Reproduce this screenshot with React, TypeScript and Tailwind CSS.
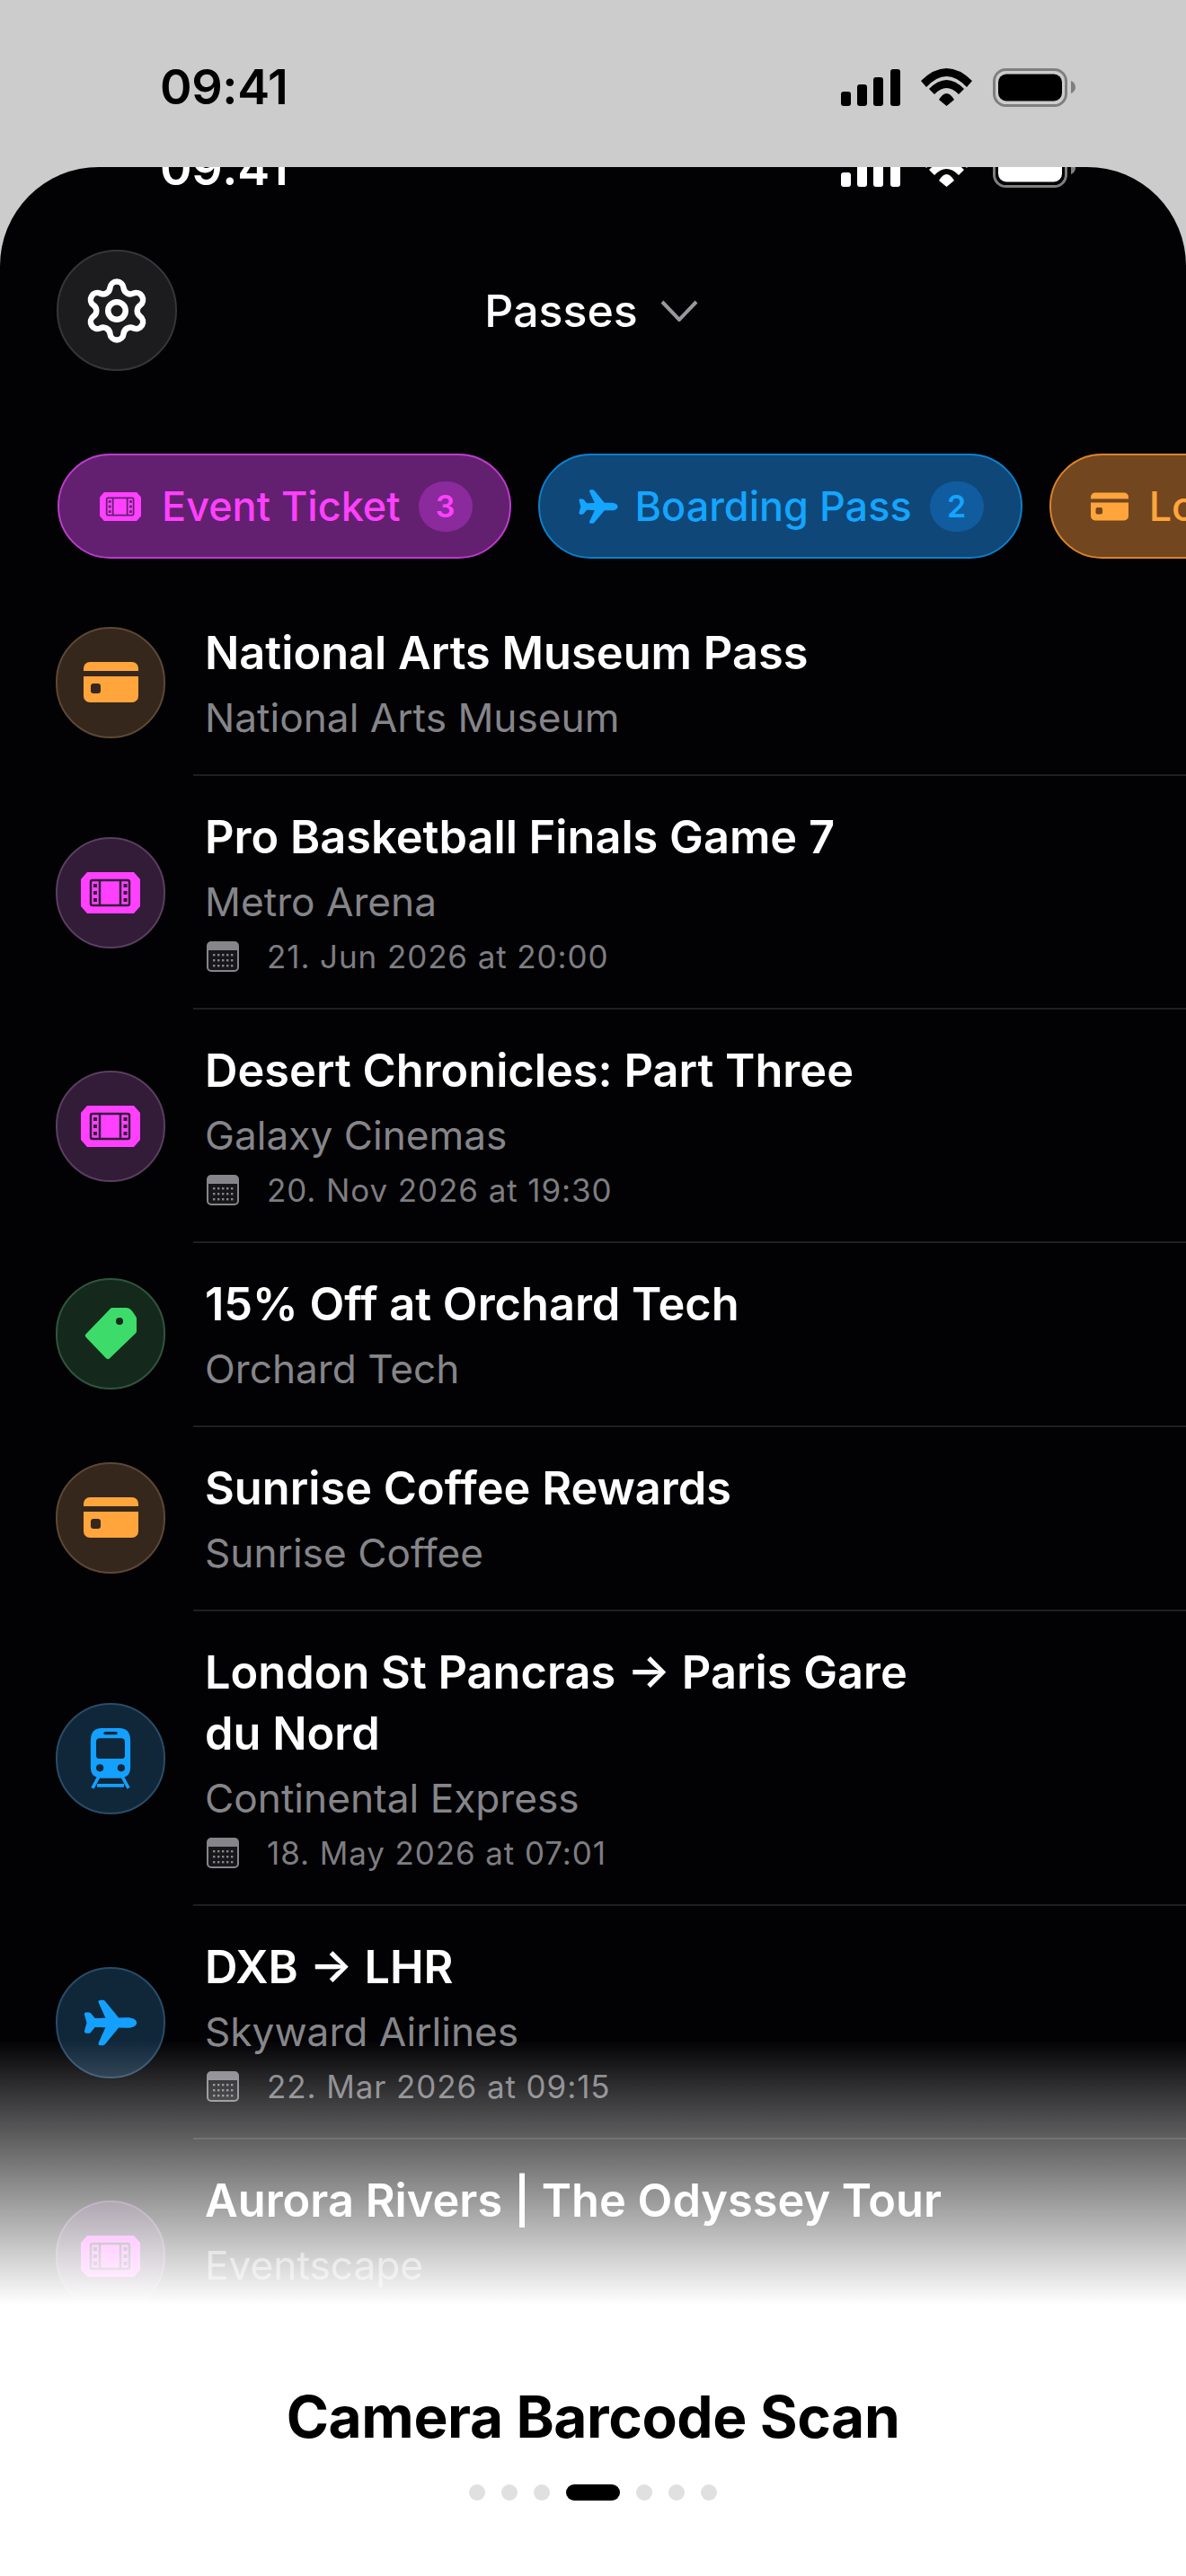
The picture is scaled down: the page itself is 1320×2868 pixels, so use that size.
import React from 'react';
import { Settings } from 'lucide-react';
import { IoAirplane } from 'react-icons/io5';

type Kind = 'ticket' | 'card' | 'tag' | 'train' | 'plane';

interface PassRow {
  kind: Kind;
  title: string;
  issuer: string;
  date?: string;
}

const passes: PassRow[] = [
  { kind: 'card', title: 'National Arts Museum Pass', issuer: 'National Arts Museum' },
  { kind: 'ticket', title: 'Pro Basketball Finals Game 7', issuer: 'Metro Arena', date: '21. Jun 2026 at 20:00' },
  { kind: 'ticket', title: 'Desert Chronicles: Part Three', issuer: 'Galaxy Cinemas', date: '20. Nov 2026 at 19:30' },
  { kind: 'tag', title: '15% Off at Orchard Tech', issuer: 'Orchard Tech' },
  { kind: 'card', title: 'Sunrise Coffee Rewards', issuer: 'Sunrise Coffee' },
  { kind: 'train', title: 'London St Pancras → Paris Gare du Nord', issuer: 'Continental Express', date: '18. May 2026 at 07:01' },
  { kind: 'plane', title: 'DXB → LHR', issuer: 'Skyward Airlines', date: '22. Mar 2026 at 09:15' },
  { kind: 'ticket', title: 'Aurora Rivers | The Odyssey Tour', issuer: 'Eventscape', date: '14. Aug 2026 at 20:30' },
];

const circleStyles: Record<Kind, string> = {
  card: 'bg-[#35271c] border-[#5c4835]',
  ticket: 'bg-[#321c38] border-[#5a3e60]',
  tag: 'bg-[#14291c] border-[#2f5540]',
  train: 'bg-[#10273a] border-[#2a4c68]',
  plane: 'bg-[#10273a] border-[#2a4c68]',
};

const TicketIcon = ({ className, cut }: { className: string; cut: string }) => (
  <svg viewBox="0 0 66 46" className={className}>
    <path d="M7 0H59L66 8V38L59 46H7L0 38V8Z" fill="currentColor" />
    <rect x="11" y="9" width="43" height="28" rx="2" fill="none" stroke={cut} strokeWidth="2.5" />
    <path d="M21 9V37M44 9V37" stroke={cut} strokeWidth="2.5" />
    {[13, 21, 29].map((y) => (
      <g key={y} fill={cut}>
        <rect x="14" y={y} width="4" height="4" />
        <rect x="47.5" y={y} width="4" height="4" />
      </g>
    ))}
  </svg>
);

const CardIcon = ({ className, cut }: { className: string; cut: string }) => (
  <svg viewBox="0 0 61 45" className={className}>
    <rect width="61" height="45" rx="7" fill="currentColor" />
    <rect y="10" width="61" height="6" fill={cut} />
    <rect x="8" y="24" width="11" height="11" rx="3" fill={cut} />
  </svg>
);

const TagIcon = ({ className, cut }: { className: string; cut: string }) => (
  <svg viewBox="0 0 59 59" className={className}>
    <path
      d="M31 4H46Q49 4 51 7L55 13V27L26 55L4 32Z"
      fill="currentColor"
      stroke="currentColor"
      strokeWidth="6"
      strokeLinejoin="round"
    />
    <circle cx="39" cy="16" r="4" fill={cut} />
  </svg>
);

const TrainIcon = ({ className, cut }: { className: string; cut: string }) => (
  <svg viewBox="0 0 47 66" className={className}>
    <path d="M14 0H33Q45 0 45 14V42Q45 54 33 54H14Q2 54 2 42V14Q2 0 14 0Z" fill="currentColor" />
    <rect x="16" y="4" width="15" height="3" rx="1.5" fill={cut} />
    <path d="M12 11H35Q39 11 39 15V30Q39 33 35 33H12Q8 33 8 30V15Q8 11 12 11Z" fill={cut} />
    <circle cx="12" cy="43" r="4" fill={cut} />
    <circle cx="35" cy="43" r="4" fill={cut} />
    <path d="M11 52L4 65M36 52L43 65M9 62H38" stroke="currentColor" strokeWidth="3.5" fill="none" />
  </svg>
);

const PassIcon = ({ kind }: { kind: Kind }) => {
  if (kind === 'card') return <CardIcon className="h-[45px] w-[61px] text-[#ffa53c]" cut="#35271c" />;
  if (kind === 'ticket') return <TicketIcon className="h-[46px] w-[66px] text-[#ff40ff]" cut="#321c38" />;
  if (kind === 'tag') return <TagIcon className="h-[59px] w-[59px] text-[#3ddc6a]" cut="#14291c" />;
  if (kind === 'train') return <TrainIcon className="h-[68px] w-[50px] text-[#14a0ff]" cut="#10273a" />;
  return <IoAirplane className="h-[62px] w-[62px] text-[#14a0ff]" />;
};

const CalendarIcon = () => (
  <svg viewBox="0 0 36 34" className="h-[34px] w-[36px] shrink-0">
    <rect x="1" y="1" width="34" height="32" rx="4" fill="#17171a" stroke="#85858a" strokeWidth="2" />
    <path d="M1 10V5Q1 1 5 1H31Q35 1 35 5V10Z" fill="#85858a" />
    {[14, 20, 26].map((y) => (
      <g key={y} fill="#85858a">
        {[8, 13, 18, 23, 28].map((x) => (
          <rect key={x} x={x - 1} y={y} width="2.4" height="2.4" />
        ))}
      </g>
    ))}
  </svg>
);

const StatusBar = ({ dark }: { dark?: boolean }) => {
  const ink = dark ? '#000000' : '#ffffff';
  return (
    <div
      className="flex h-[56px] items-center justify-between pl-[178px] pr-[122px] font-['Inter',sans-serif] text-[54px] font-semibold tracking-[-0.4px]"
      style={{ color: ink }}
    >
      <span className="leading-none">09:41</span>
      <div className="flex items-center gap-[23px]">
        <svg viewBox="0 0 66 41" className="h-[41px] w-[66px]" fill={ink}>
          <rect x="0" y="25" width="11" height="16" rx="3" />
          <rect x="18" y="17" width="11" height="24" rx="3" />
          <rect x="36" y="9" width="11" height="32" rx="3" />
          <rect x="55" y="0" width="11" height="41" rx="3" />
        </svg>
        <svg viewBox="0 0 57 42" className="h-[42px] w-[57px]" fill={ink}>
          <path d="M0 14Q28.5 -14 57 14L51 21Q28.5 -3 6 21Z" />
          <path d="M9 23Q28.5 3 48 23L42 29Q28.5 15 15 29Z" />
          <path d="M20 35Q28.5 21 37 35L28.5 42Z" />
        </svg>
        <svg viewBox="0 0 93 43" className="h-[43px] w-[93px]">
          <rect x="1.5" y="1.5" width="80" height="40" rx="13" fill="none" stroke="#7f7f7f" strokeWidth="3" />
          <rect x="6" y="6.5" width="71" height="30" rx="9" fill={ink} />
          <path d="M87 14C90 15 92 18 92 21C92 24 90 27 87 28Z" fill="#7f7f7f" />
        </svg>
      </div>
    </div>
  );
};

const FilterChip = ({
  label,
  count,
  icon,
  chip,
  badge,
  pad,
}: {
  label: string;
  count: number;
  icon: React.ReactNode;
  chip: string;
  badge: string;
  pad: string;
}) => (
  <div className={`flex h-[117px] shrink-0 items-center rounded-full border-2 pr-[41px] ${pad} ${chip}`}>
    {icon}
    <span className="ml-[23px] text-[45px] font-medium leading-none">{label}</span>
    <span className={`ml-[20px] flex h-[56px] w-[60px] items-center justify-center rounded-full text-[34px] font-semibold ${badge}`}>
      {count}
    </span>
  </div>
);

const Row = ({ pass }: { pass: PassRow }) => (
  <div className="flex items-center pl-[62px]">
    <div
      className={`flex h-[124px] w-[122px] shrink-0 items-center justify-center rounded-full border-2 ${pass.date ? '' : 'mb-[4px]'} ${circleStyles[pass.kind]}`}
    >
      <PassIcon kind={pass.kind} />
    </div>
    <div className={`ml-[31px] flex-1 border-b-2 border-[#1f1f21] pl-[13px] pt-[34px] ${pass.date ? 'pb-[34px]' : 'pb-[35px]'}`}>
      <div className="max-w-[830px] text-[50.5px] font-semibold leading-[68px] text-white">{pass.title}</div>
      <div className="mt-[10px] text-[44.2px] leading-[56px] text-[#85858a]">{pass.issuer}</div>
      {pass.date && (
        <div className="ml-[2px] mt-[10px] flex h-[46px] items-center gap-[31px] text-[35px] leading-none tracking-[0.9px] text-[#7d7d82]">
          <CalendarIcon />
          <span>{pass.date}</span>
        </div>
      )}
    </div>
  </div>
);

const Dot = ({ active }: { active?: boolean }) =>
  active ? <div className="h-[18px] w-[60px] rounded-full bg-black" /> : <div className="h-[18px] w-[18px] rounded-full bg-[#e0e0e0]" />;

export default function App() {
  return (
    <div className="flex h-[2868px] w-[1320px] flex-col overflow-hidden bg-white font-['Inter',sans-serif]">
      <div className="h-[186px] shrink-0 bg-[#cccccc] pt-[69px]">
        <StatusBar dark />
      </div>

      <div className="relative h-[2380px] shrink-0 overflow-hidden bg-[#cccccc]">
        <div className="h-full overflow-hidden rounded-t-[110px] bg-[#020103]">
          <div className="-mt-[27px]">
            <StatusBar />
          </div>

          <div className="mt-[63px] grid h-[135px] grid-cols-[1fr_auto_1fr] items-center pl-[63px] pr-[67px]">
            <div className="flex h-[135px] w-[134px] items-center justify-center rounded-full border-2 border-[#36363a] bg-[#1c1c1e]">
              <Settings className="h-[78px] w-[78px] text-white" strokeWidth={2} />
            </div>
            <div className="flex items-center gap-[25px]">
              <span className="text-[50px] font-medium leading-none text-white">Passes</span>
              <svg viewBox="0 0 42 24" className="h-[24px] w-[42px]" fill="none" stroke="#98989c" strokeWidth="4">
                <path d="M2 2L21 22L40 2" />
              </svg>
            </div>
            <div />
          </div>

          <div className="ml-[64px] mt-[92px] flex gap-[30px]">
            <FilterChip
              label="Event Ticket"
              count={3}
              pad="pl-[45px]"
              chip="bg-[#632070] border-[#bb3ccb] text-[#ff40ff]"
              badge="bg-[#8a2a9c]"
              icon={<TicketIcon className="h-[32px] w-[46px]" cut="#632070" />}
            />
            <FilterChip
              label="Boarding Pass"
              count={2}
              pad="pl-[42px]"
              chip="bg-[#0f4778] border-[#0d7fca] text-[#14a5ff]"
              badge="bg-[#115c9f]"
              icon={<IoAirplane className="-mr-[5px] h-[46px] w-[46px]" />}
            />
            <FilterChip
              label="Loyalty Card"
              count={2}
              pad="pl-[44px]"
              chip="bg-[#72461f] border-[#d9832c] text-[#ffa53c]"
              badge="bg-[#8f5a26]"
              icon={<CardIcon className="h-[32px] w-[42px]" cut="#72461f" />}
            />
          </div>

          <div className="mt-[37px]">
            {passes.map((pass) => (
              <Row key={pass.title} pass={pass} />
            ))}
          </div>
        </div>

        {/* white fade over the bottom of the list */}
        <div className="absolute inset-x-0 bottom-0 h-[295px] bg-gradient-to-b from-white/0 to-white" />
      </div>

      <div className="flex flex-1 flex-col items-center">
        <div className="mt-[87px] text-[64px] font-bold leading-[76px] tracking-[-0.4px] text-black">Camera Barcode Scan</div>
        <div className="mt-[37px] flex items-center gap-[18px]">
          <Dot />
          <Dot />
          <Dot />
          <Dot active />
          <Dot />
          <Dot />
          <Dot />
        </div>
      </div>
    </div>
  );
}
